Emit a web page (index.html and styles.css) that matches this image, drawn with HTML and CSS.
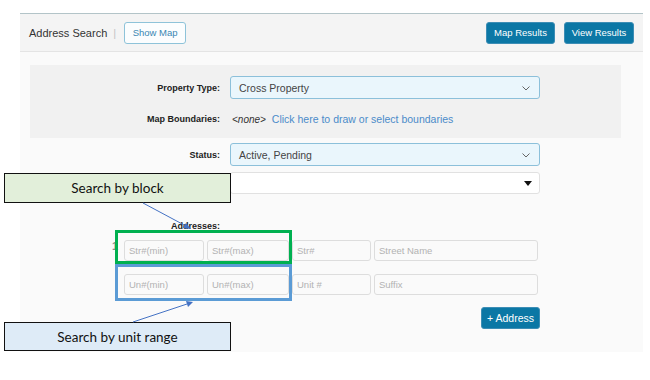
FILE: index.html
```html
<!DOCTYPE html>
<html>
<head>
<meta charset="utf-8">
<link rel="stylesheet" href="styles.css">
</head>
<body>
<div class="panel">
  <div class="header">
    <div class="header-left">
      <span class="title">Address Search</span>
      <span class="sep">|</span>
      <button class="btn-outline">Show Map</button>
    </div>
    <div class="header-right">
      <button class="btn-primary">Map Results</button>
      <button class="btn-primary">View Results</button>
    </div>
  </div>
  <div class="content">
    <div class="typebox">
      <div class="form-row">
        <label class="lbl">Property Type:</label>
        <div class="select select-blue"><span>Cross Property</span>
          <svg class="chev" width="8" height="5" viewBox="0 0 8 5"><path d="M0.5 0.5 L4 4 L7.5 0.5" fill="none" stroke="#666" stroke-width="1"/></svg>
        </div>
      </div>
      <div class="form-row">
        <label class="lbl">Map Boundaries:</label>
        <div class="bounds"><em>&lt;none&gt;</em> <a class="link">Click here to draw or select boundaries</a></div>
      </div>
    </div>
    <div class="form-row status-row">
      <label class="lbl">Status:</label>
      <div class="select select-blue"><span>Active, Pending</span>
        <svg class="chev" width="8" height="5" viewBox="0 0 8 5"><path d="M0.5 0.5 L4 4 L7.5 0.5" fill="none" stroke="#666" stroke-width="1"/></svg>
      </div>
    </div>
    <div class="form-row plain-row">
      <span class="lbl"></span>
      <div class="select select-white"><span></span>
        <svg class="tri" width="8" height="5" viewBox="0 0 8 5"><path d="M0 0 L8 0 L4 5 Z" fill="#111"/></svg>
      </div>
    </div>
    <div class="form-row addr-label-row">
      <label class="lbl">Addresses:</label>
    </div>
    <div class="addr-grid">
      <span class="rownum">1</span>
      <input class="inp" placeholder="Str#(min)">
      <input class="inp" placeholder="Str#(max)">
      <input class="inp" placeholder="Str#">
      <input class="inp" placeholder="Street Name">
      <span class="rownum"></span>
      <input class="inp" placeholder="Un#(min)">
      <input class="inp" placeholder="Un#(max)">
      <input class="inp" placeholder="Unit #">
      <input class="inp" placeholder="Suffix">
    </div>
    <div class="add-row">
      <button class="btn-primary btn-add">+ Address</button>
    </div>
  </div>
</div>

<div class="hl hl-green"></div>
<div class="hl hl-blue"></div>
<div class="callout callout-block">Search by block</div>
<div class="callout callout-unit">Search by unit range</div>
<svg class="arrows" width="650" height="380" viewBox="0 0 650 380">
  <line x1="143" y1="203" x2="186" y2="226" stroke="#4472c4" stroke-width="1"/>
  <path d="M191 229 L183 228 L186 223 Z" fill="#4472c4"/>
  <line x1="133" y1="322" x2="187" y2="304" stroke="#4472c4" stroke-width="1"/>
  <path d="M193 302 L186 301 L188 307 Z" fill="#4472c4"/>
</svg>
</body>
</html>
```
FILE: styles.css
```css
* { box-sizing: border-box; }
html, body { margin: 0; padding: 0; }
body {
  position: relative;
  width: 650px;
  height: 380px;
  background: #ffffff;
  font-family: "Liberation Sans", Arial, sans-serif;
  color: #222;
  overflow: hidden;
}
.panel {
  margin: 13px 0 0 20px;
  width: 623px;
  border-top: 1px solid #b3c4c8;
}
.header {
  height: 38px;
  background: #f4f4f4;
  border-bottom: 1px solid #e4e4e4;
  display: flex;
  align-items: center;
  justify-content: space-between;
  padding: 0 9px 0 9px;
}
.header-left { display: flex; align-items: center; }
.title { font-size: 11px; color: #333; }
.sep { color: #c4c4c4; font-size: 11px; margin: 0 8px 0 6px; }
.header-right { display: flex; gap: 9px; }
button { font-family: inherit; cursor: pointer; }
.btn-outline {
  height: 22px;
  width: 62px;
  padding: 0;
  background: #fbfdfe;
  border: 1px solid #8ec3d9;
  border-radius: 3px;
  color: #3a87b3;
  font-size: 9.5px;
}
.btn-primary {
  height: 22px;
  padding: 0;
  width: 69px;
  background: #0b77a5;
  border: 1px solid #3c8db5;
  border-radius: 3px;
  color: #ffffff;
  font-size: 9.5px;
}
.header-right .btn-primary:last-child { width: 70px; }
.content {
  background: #fafafa;
  height: 300px;
  padding: 13px 0 0 10px;
}
.typebox {
  width: 591px;
  height: 73px;
  background: #f1f1f1;
  padding-top: 11px;
}
.form-row {
  display: grid;
  grid-template-columns: 190px 310px;
  column-gap: 10px;
  align-items: center;
}
.typebox .form-row + .form-row { margin-top: 14px; }
.lbl {
  text-align: right;
  font-weight: bold;
  font-size: 9px;
  color: #222;
}
.select {
  height: 23px;
  border-radius: 3px;
  display: flex;
  align-items: center;
  justify-content: space-between;
  padding: 0 9px 0 8px;
  font-size: 10.5px;
  color: #444;
}
.select-blue {
  background: #eaf6fc;
  border: 1px solid #8cc0da;
}
.select-white {
  background: #ffffff;
  border: 1px solid #e1e1e1;
  height: 22px;
  padding-right: 7px;
}
.chev { margin-top: 1px; }
.bounds { font-size: 10.5px; color: #333; padding-left: 2px; }
.bounds em { font-size: 10px; margin-right: 3px; }
.link { color: #4b8bc9; }
.status-row { margin-top: 5px; }
.plain-row { margin-top: 6px; }
.addr-label-row { margin-top: 26px; height: 12px; }
.addr-grid {
  margin: 8px 0 0 80px;
  display: grid;
  grid-template-columns: 11px 80px 82px 79px 164px;
  column-gap: 3px;
  row-gap: 13px;
  align-items: center;
}
.rownum {
  font-size: 11px;
  font-weight: bold;
  color: #888;
  text-align: left;
  padding-left: 2px;
  align-self: start;
}
.inp {
  height: 21px;
  width: 100%;
  border: 1.5px solid #dddddd;
  border-radius: 3px;
  background: #fafafa;
  padding: 0 4px;
  font-family: inherit;
  font-size: 9.5px;
  color: #444;
}
.inp::placeholder { color: #b2b2b2; }
.add-row {
  width: 510px;
  display: flex;
  justify-content: flex-end;
  margin-top: 12px;
}
.btn-add {
  width: 59px;
  height: 22px;
  font-size: 10.5px;
}
.hl {
  position: absolute;
  left: 115px;
  width: 177px;
  border-width: 3px;
  border-style: solid;
}
.hl-green { top: 230px; height: 34px; border-color: #00b050; }
.hl-blue { top: 264px; height: 37px; border-color: #5b9bd5; }
.callout {
  position: absolute;
  left: 4px;
  width: 227px;
  border: 1px solid #111;
  display: flex;
  align-items: center;
  justify-content: center;
  font-family: Lato, "Open Sans", sans-serif;
  font-size: 13.5px;
  color: #111;
}
.callout-block { top: 173px; height: 30px; background: #e2efda; }
.callout-unit { top: 322px; height: 29px; background: #deebf7; }
.arrows { position: absolute; left: 0; top: 0; pointer-events: none; }
```
